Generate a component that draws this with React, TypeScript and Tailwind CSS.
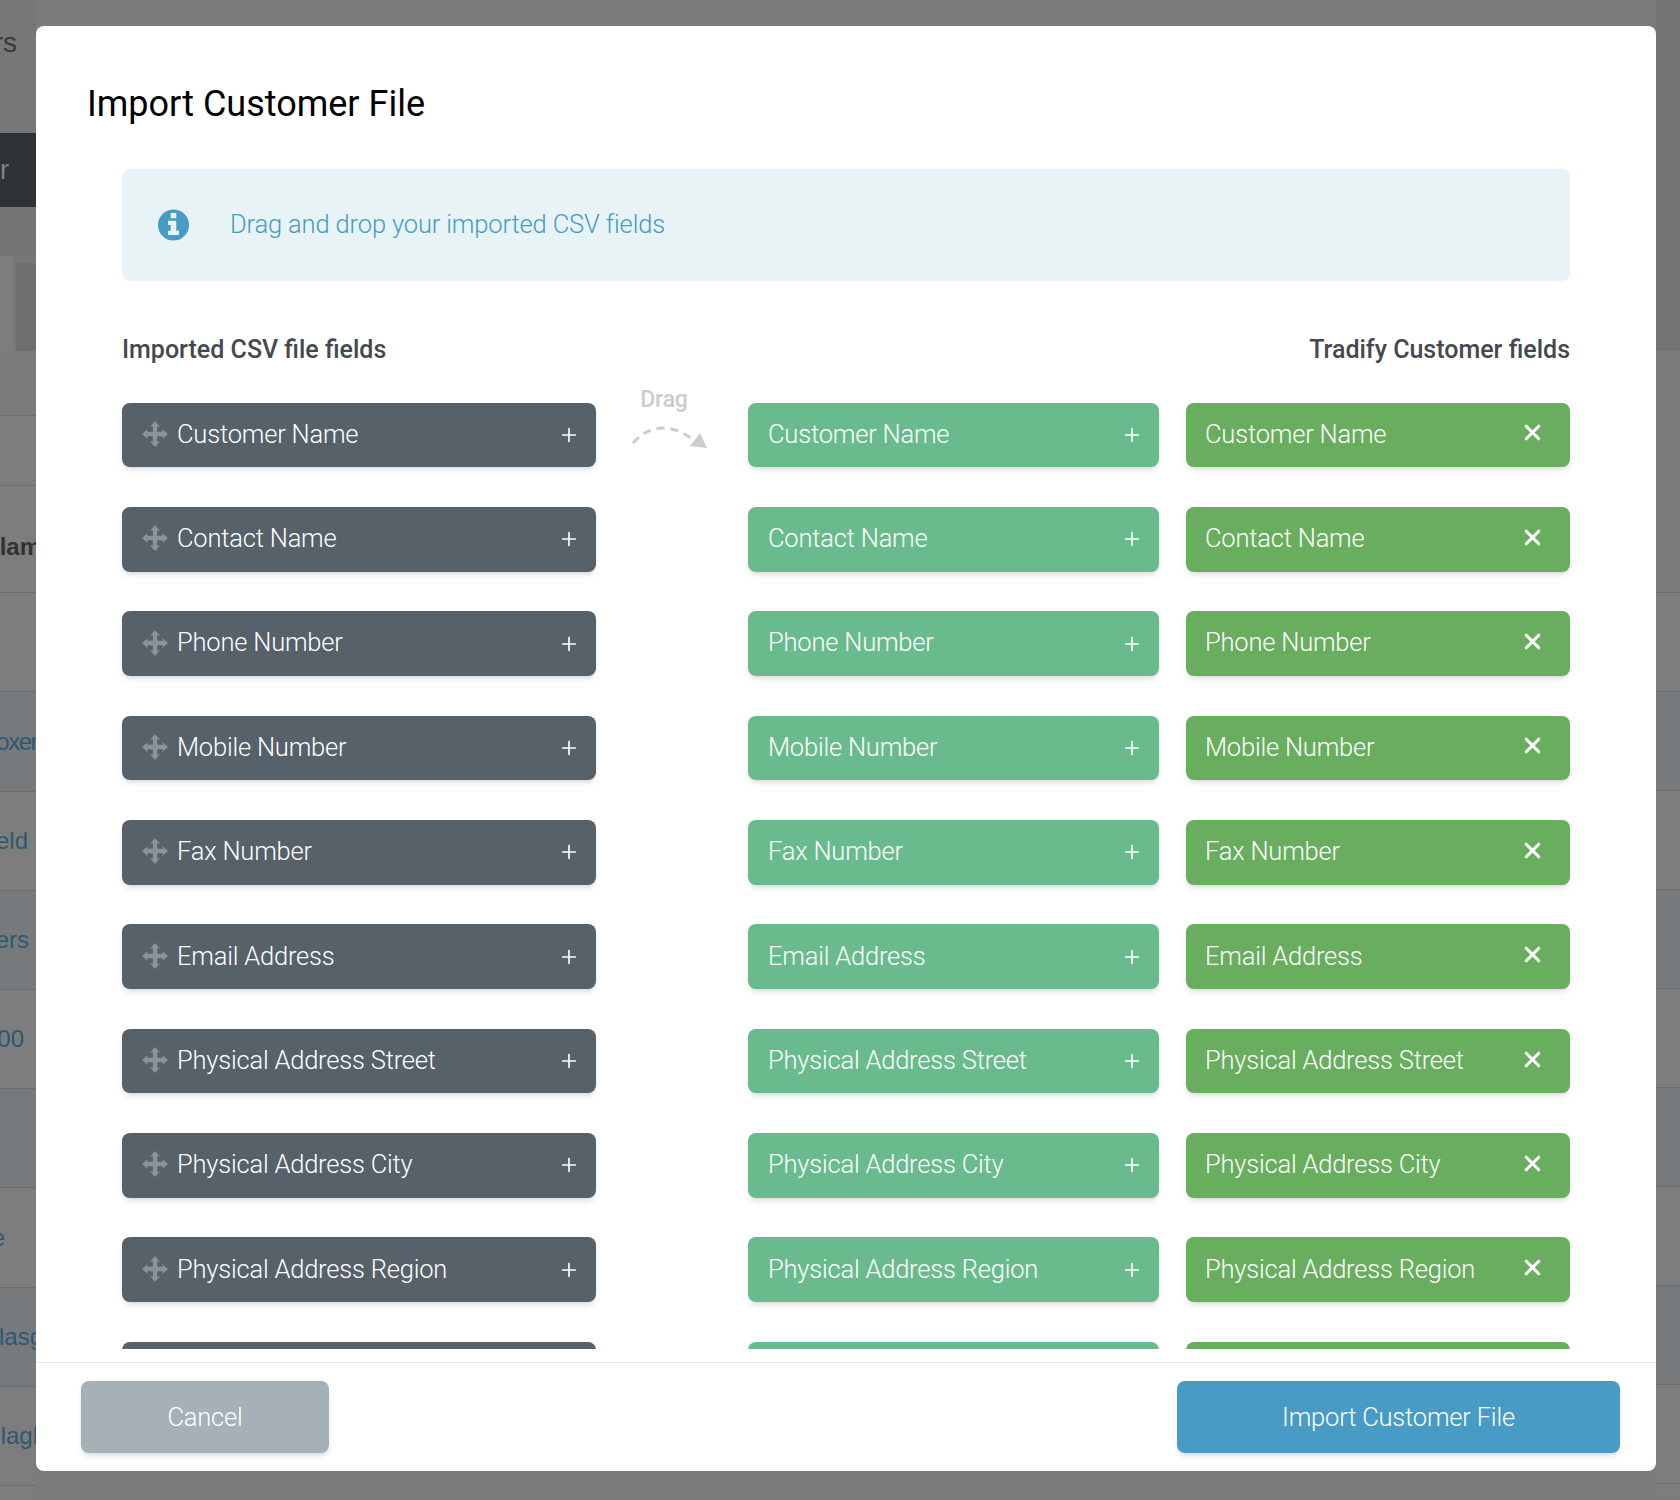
import { Plus, X } from "lucide-react";

const fields = [
  "Customer Name",
  "Contact Name",
  "Phone Number",
  "Mobile Number",
  "Fax Number",
  "Email Address",
  "Physical Address Street",
  "Physical Address City",
  "Physical Address Region",
  "Physical Address Country",
];

function MoveIcon() {
  return (
    <svg viewBox="0 0 24 24" className="size-[26px] shrink-0 -mt-[2px] fill-[#89939a]">
      <path d="M12 0l4.5 5H14v5h5V7.5l5 4.5-5 4.5V14h-5v5h2.5L12 24l-4.5-5H10v-5H5v2.5L0 12l5-4.5V10h5V5H7.5z" />
    </svg>
  );
}

function InfoIcon() {
  return (
    <svg viewBox="0 0 31 32" className="w-[31px] h-[32px] shrink-0">
      <circle cx="15.5" cy="16" r="15.5" fill="#479bc4" />
      <path fill="#e8f3f6" d="M12.7 4h5.6v5.2h-5.6zM10 11.8h8.3v10h2.7V26H10v-4.2h2.7v-5.8H10z" />
    </svg>
  );
}

function DragHint() {
  return (
    <div className="w-[152px] h-full shrink-0 flex flex-col items-center pr-4 -mt-[16px] self-start">
      <span className="text-[23px] leading-[26px] font-medium text-[#cccccc]">Drag</span>
      <svg width="90" height="40" viewBox="0 0 90 40" fill="none" className="shrink-0">
        <path d="M14 30C24 19 34 15 44 15C54 15 64 19 73 26" stroke="#cccccc" strokeWidth="3" strokeDasharray="8 6" />
        <path d="M71 33L81 20L88 35Z" fill="#cccccc" />
      </svg>
    </div>
  );
}

function BackdropRow({
  h,
  text,
  bold,
  link,
  alt,
  offset,
}: {
  h: string;
  text: string;
  bold?: boolean;
  link?: boolean;
  alt?: boolean;
  offset?: string;
}) {
  return (
    <div
      className={`${h} ${alt ? "bg-[#777a7c]" : "bg-[#7d7d7d]"} border-b border-[#6d6d6d] flex items-center justify-end whitespace-nowrap overflow-hidden text-[24px] font-['Liberation_Sans',sans-serif] ${
        link ? "text-[#2d5870]" : "text-[#2f3336]"
      } ${bold ? "font-bold pt-[16px]" : ""}`}
    >
      <span className={offset}>{text}</span>
    </div>
  );
}

/* backdrop rows that show either side of the dialog */
function BackdropLeft() {
  return (
    <div className="w-[36px] h-[1500px] shrink-0 overflow-hidden">
      <div className="h-[133px] bg-[#777777] flex justify-end pt-[26px] pr-[19px]">
        <span className="text-[28px] leading-[34px] text-[#333a40] font-['Liberation_Sans',sans-serif]">rs</span>
      </div>
      <div className="h-[74px] bg-[#2c3236] flex items-center">
        <span className="text-[27px] text-[#7d8387] font-['Liberation_Sans',sans-serif]">r</span>
      </div>
      <div className="h-[49px] bg-[#757575]" />
      <div className="h-[95px] bg-[#777777] flex">
        <div className="w-[13px] bg-[#7e7e7e]" />
        <div className="w-[20px] ml-[3px] mt-[7px] bg-[#6f6f6f]" />
      </div>
      <div className="h-[65px] bg-[#7b7b7b] border-b border-[#6d6d6d]" />
      <div className="h-[70px] bg-[#7d7d7d] border-b border-[#6d6d6d]" />
      <BackdropRow h="h-[107px]" bold text="lam" offset="-mr-[5px]" />
      <BackdropRow h="h-[99px]" text="" />
      <BackdropRow h="h-[100px]" link text="oxer" alt offset="-mr-[1px] tracking-[-1.5px]" />
      <BackdropRow h="h-[99px]" link text="eld" offset="pr-[8px]" />
      <BackdropRow h="h-[99px]" link text="ers" alt offset="pr-[7px]" />
      <BackdropRow h="h-[99px]" link text="00" offset="pr-[12px]" />
      <BackdropRow h="h-[99px]" text="" alt />
      <BackdropRow h="h-[100px]" link text="e" offset="pr-[31px]" />
      <BackdropRow h="h-[99px]" link text="lasg" alt offset="-mr-[7px]" />
      <BackdropRow h="h-[99px]" link text="lagl" offset="-mr-[2px]" />
      <div className="h-[15px] bg-[#7d7d7d]" />
    </div>
  );
}

function BackdropRight() {
  return (
    <div className="flex-1 h-[1500px] overflow-hidden">
      <div className="h-[351px] bg-[#747474]" />
      <div className="h-[242px] bg-[#7c7c7c] border-b border-[#6d6d6d]" />
      {["bg-[#7d7d7d]", "bg-[#777a7c]", "bg-[#7d7d7d]", "bg-[#777a7c]", "bg-[#7d7d7d]", "bg-[#777a7c]", "bg-[#7d7d7d]", "bg-[#777a7c]", "bg-[#7d7d7d]"].map(
        (c, i) => (
          <div key={i} className={`h-[99px] ${c} border-b border-[#6d6d6d]`} />
        ),
      )}
      <div className="h-[15px] bg-[#7d7d7d]" />
    </div>
  );
}

export default function App() {
  return (
    <div className="flex h-[1500px] overflow-hidden bg-[#7c7c7c] font-['Roboto',sans-serif]">
      <BackdropLeft />
      <div className="w-[1620px] h-[1445px] mt-[26px] shrink-0 bg-white rounded-[8px] flex flex-col">
        <div className="h-[1323px] overflow-hidden shrink-0">
          <h1 className="pl-[51px] pt-[51px] text-[36px] leading-[54px] text-black">Import Customer File</h1>
          <div className="ml-[86px] w-[1448px]">
            <div className="mt-[38px] h-[112px] rounded-[8px] bg-[#e8f3f6] flex items-center pl-[36px]">
              <InfoIcon />
              <span className="ml-[41px] pb-[2px] text-[25.5px] tracking-[-0.15px] font-light text-[#479bc4]">Drag and drop your imported CSV fields</span>
            </div>
            <div className="mt-[54px] h-[30px] flex items-center justify-between text-[25px] font-medium text-[#44494e]">
              <span>Imported CSV file fields</span>
              <span>Tradify Customer fields</span>
            </div>
            <div className="mt-[37.5px] flex flex-col gap-[39.575px]">
              {fields.map((f, i) => (
                <div key={f} className="flex h-[64.8px] shrink-0 text-[25.5px] tracking-[-0.2px] font-light text-white">
                  <div className="w-[474px] shrink-0 rounded-[8px] bg-[#56616a] shadow-md flex items-center pl-[20px] pr-[16px]">
                    <MoveIcon />
                    <span className="ml-[9px] flex-1 pb-[2px]">{f}</span>
                    <Plus size={22} strokeWidth={1.8} />
                  </div>
                  {i === 0 ? <DragHint /> : <div className="w-[152px] shrink-0" />}
                  <div className="w-[411px] shrink-0 rounded-[8px] bg-[#69bb8e] shadow-md flex items-center pl-[20px] pr-[16px]">
                    <span className="flex-1 pb-[2px]">{f}</span>
                    <Plus size={22} strokeWidth={1.8} />
                  </div>
                  <div className="ml-[27px] w-[384px] shrink-0 rounded-[8px] bg-[#69ad5f] shadow-md flex items-center pl-[19px] pr-[25px]">
                    <span className="flex-1 pb-[2px]">{f}</span>
                    <X size={25} strokeWidth={3} className="-mt-[4px]" />
                  </div>
                </div>
              ))}
            </div>
          </div>
        </div>
        {/* footer */}
        <div className="mt-[13px] border-t border-[#e5ecee] flex justify-between pt-[18px] pl-[45px] pr-[36px]">
          <button className="w-[248px] h-[72px] rounded-[8px] bg-[#a5b0b7] shadow-md text-[25.5px] tracking-[-0.2px] font-light text-white">Cancel</button>
          <button className="w-[443px] h-[72px] rounded-[8px] bg-[#479bc4] shadow-md text-[25.5px] tracking-[-0.2px] font-light text-white">Import Customer File</button>
        </div>
      </div>
      <BackdropRight />
    </div>
  );
}
